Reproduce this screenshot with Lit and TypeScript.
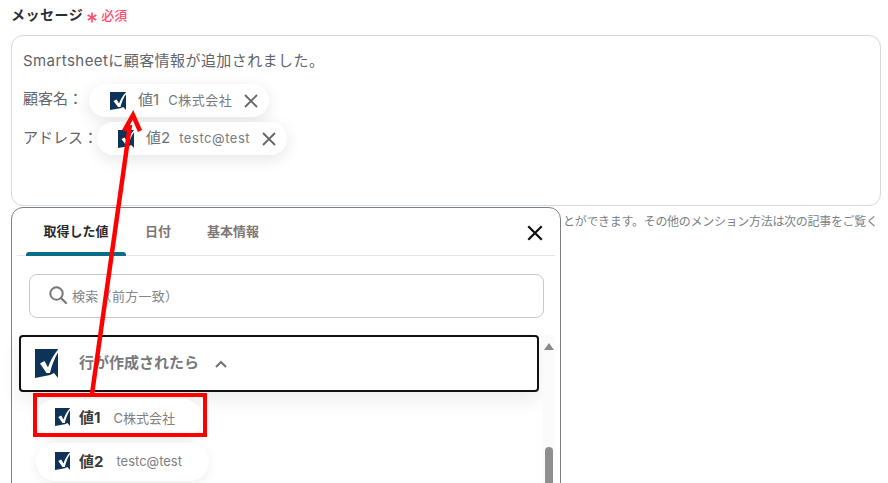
import { LitElement, css, html, svg } from "lit";
import { customElement } from "lit/decorators.js";

const logo = (w: number, h: number) => html`<svg class="logo" width=${w} height=${h} viewBox="0 0 23 29" preserveAspectRatio="none">
  <path d="M0 0H23V29L19 24L15 26L0 29Z" fill="#0d3358" />
  <path d="M5 14.5L9.5 12L13 18.5C15 12 18.5 6 23 0.5V3.5C19.5 9 16.5 17 15 24H11.5Z" fill="#fff" />
</svg>`;

const closeIcon = (size: number, color: string, width: number) => html`<svg width=${size} height=${size} viewBox="0 0 16 16">
  <path d="M2 2L14 14M14 2L2 14" stroke=${color} stroke-width=${width} fill="none" />
</svg>`;

const searchIcon = svg`<circle cx="8.5" cy="8.5" r="6.2" stroke="#777" stroke-width="2" fill="none" />
  <path d="M13 13L18 18" stroke="#777" stroke-width="2.2" stroke-linecap="round" />`;

@customElement("app-root")
export class AppRoot extends LitElement {
  static styles = css`
    :host {
      display: block;
      position: relative;
      width: 888px;
      height: 483px;
      overflow: hidden;
      background: #fff;
      font-family: Inter, "Noto Sans CJK JP", sans-serif;
      color: #5f646b;
    }

    .field {
      display: flex;
      flex-direction: column;
      gap: 10px;
      padding: 3px 7px 0 11px;
    }

    .label {
      display: flex;
      align-items: center;
      gap: 4px;
      height: 22px;
      font-size: 14px;
      font-weight: 700;
      letter-spacing: 0.5px;
      color: #2a2f36;
    }

    .required {
      display: flex;
      align-items: center;
      gap: 4px;
      font-size: 13px;
      font-weight: 500;
      letter-spacing: 0;
      color: #ff4f6e;
    }

    .star {
      margin-top: 7px;
    }

    .box {
      display: flex;
      flex-direction: column;
      height: 171px;
      padding: 15px 11px 0;
      border: 1px solid #d4d7dd;
      border-radius: 12px;
      box-sizing: border-box;
    }

    .intro {
      font-size: 15px;
      line-height: 20px;
      letter-spacing: 0.43px;
      margin-bottom: 13px;
    }

    .line {
      display: flex;
      align-items: flex-start;
      height: 38px;
      font-size: 15px;
      line-height: 30px;
    }

    .line.second {
      line-height: 32px;
    }

    .chip {
      display: flex;
      align-items: center;
      height: 33px;
      border-radius: 17px;
      background: #fff;
      box-shadow: 0 4px 16px rgba(0, 0, 0, 0.1);
      color: #6b6f75;
      line-height: 20px;
    }

    .chip.customer {
      margin-left: 6px;
    }

    .chip.address {
      margin-left: -1px;
    }

    .chip .logo {
      margin-left: 21px;
    }

    .chip .name {
      margin-left: 12px;
      padding-bottom: 2px;
      font-size: 15px;
    }

    .chip .sub {
      margin-left: 9px;
      padding-bottom: 2px;
      font-size: 13px;
      letter-spacing: 0.55px;
      color: #777b80;
    }

    .chip svg:last-child {
      margin: 0 10px 0 11px;
    }

    .hint {
      position: absolute;
      left: 563px;
      top: 213px;
      font-size: 12px;
      line-height: 18px;
      letter-spacing: -0.3px;
      color: #7a7f86;
      white-space: nowrap;
    }

    .popup {
      position: absolute;
      left: 11px;
      top: 207px;
      width: 550px;
      height: 300px;
      box-sizing: border-box;
      background: #fff;
      border: 1px solid #7c7f84;
      border-radius: 12px;
    }

    .tabs {
      display: flex;
      align-items: stretch;
      justify-content: space-between;
      height: 48px;
      box-sizing: border-box;
      margin-left: 5px;
      margin-right: 5px;
      border-bottom: 1px solid #e5e5e5;
    }

    .tab-list {
      display: flex;
      gap: 36px;
      padding-left: 9px;
    }

    .tab {
      display: flex;
      align-items: center;
      padding: 0 0 3px;
      font-size: 13px;
      font-weight: 700;
      color: #7d7672;
    }

    .tab.active {
      position: relative;
      width: 100px;
      margin-right: -17px;
      justify-content: center;
      color: #2a2a2a;
    }

    .tab.active::after {
      content: "";
      position: absolute;
      left: 0;
      right: 0;
      bottom: -1px;
      height: 4px;
      border-radius: 3px 3px 0 0;
      background: #0b6b8a;
    }

    .close {
      display: flex;
      align-items: center;
      padding: 2px 11px 0 0;
    }

    .search {
      display: flex;
      align-items: center;
      gap: 4px;
      height: 44px;
      margin: 18px 16px 17px 17px;
      padding: 0 0 2px 18px;
      border: 1px solid #c8c8c8;
      border-radius: 8px;
      box-sizing: border-box;
      font-size: 13px;
      letter-spacing: 0.3px;
      color: #858585;
    }

    .list {
      display: flex;
      gap: 4px;
      margin-left: 7px;
      margin-right: 5px;
    }

    .items {
      display: flex;
      flex-direction: column;
      width: 520px;
    }

    .group {
      display: flex;
      align-items: center;
      height: 57px;
      box-sizing: border-box;
      border: 2px solid #111;
      border-radius: 4px;
      padding-left: 14px;
      background: #fff;
      box-shadow: 0 8px 20px rgba(0, 0, 0, 0.08);
      font-size: 15px;
      font-weight: 700;
      color: #77797c;
    }

    .group .title {
      margin-left: 21px;
      padding-bottom: 4px;
    }

    .group svg:last-child {
      margin-left: 15px;
    }

    .pill {
      display: flex;
      align-items: center;
      align-self: flex-start;
      height: 38px;
      box-sizing: border-box;
      margin-left: 17px;
      padding: 0 27px 2px 19px;
      border-radius: 19px;
      background: #fff;
      box-shadow: 0 3px 12px rgba(0, 0, 0, 0.07);
      font-size: 15px;
      font-weight: 700;
      color: #3a3a3a;
    }

    .pill .name {
      margin-left: 9px;
      padding-bottom: 2px;
    }

    .pill .sub {
      margin-left: 13px;
      font-size: 13px;
      font-weight: 400;
      color: #808080;
    }

    .pill.first {
      margin-top: 7px;
      margin-bottom: 6px;
    }

    .scrollbar {
      position: relative;
      width: 12px;
      height: 150px;
      background: #fbfbfb;
    }

    .scrollbar::before {
      content: "";
      position: absolute;
      left: 1px;
      top: 8px;
      border-left: 5px solid transparent;
      border-right: 5px solid transparent;
      border-bottom: 7px solid #8a8a8a;
    }

    .thumb {
      position: absolute;
      left: 2px;
      top: 112px;
      width: 8px;
      height: 60px;
      border-radius: 4px;
      background: #8f8f8f;
    }

    .annotation {
      position: absolute;
      left: 0;
      top: 0;
      pointer-events: none;
    }
  `;

  render() {
    return html`
      <div class="field">
        <div class="label">
          メッセージ
          <span class="required">
            <svg class="star" width="10" height="11" viewBox="0 0 10 11">
              <path d="M5 0.5V10.5M0.7 3L9.3 8M9.3 3L0.7 8" stroke="#ff4f6e" stroke-width="1.7" fill="none" />
            </svg>
            必須
          </span>
        </div>
        <div class="box">
          <div class="intro">Smartsheetに顧客情報が追加されました。</div>
          <div class="line">
            顧客名：
            <div class="chip customer">
              ${logo(16, 18)}<span class="name">値1</span><span class="sub">C株式会社</span>
              ${closeIcon(16, "#666", 1.8)}
            </div>
          </div>
          <div class="line second">
            アドレス：
            <div class="chip address">
              ${logo(16, 18)}<span class="name">値2</span><span class="sub">testc@test</span>
              ${closeIcon(16, "#666", 1.8)}
            </div>
          </div>
        </div>
      </div>

      <div class="hint">とができます。その他のメンション方法は次の記事をご覧く</div>

      <div class="popup">
        <div class="tabs">
          <div class="tab-list">
            <div class="tab active">取得した値</div>
            <div class="tab">日付</div>
            <div class="tab">基本情報</div>
          </div>
          <div class="close">${closeIcon(18, "#111", 2)}</div>
        </div>
        <div class="search">
          <svg width="20" height="20" viewBox="0 0 20 20">${searchIcon}</svg>
          検索（前方一致）
        </div>
        <div class="list">
          <div class="items">
            <div class="group">
              ${logo(23, 29)}<span class="title">行が作成されたら</span>
              <svg width="14" height="10" viewBox="0 0 14 10">
                <path d="M2 8L7 3L12 8" stroke="#777" stroke-width="2.2" fill="none" />
              </svg>
            </div>
            <div class="pill first">
              ${logo(15, 18)}<span class="name">値1</span><span class="sub">C株式会社</span>
            </div>
            <div class="pill">
              ${logo(15, 18)}<span class="name">値2</span><span class="sub">testc@test</span>
            </div>
          </div>
          <div class="scrollbar"><div class="thumb"></div></div>
        </div>
      </div>

      <svg class="annotation" width="888" height="483" viewBox="0 0 888 483">
        <rect x="35" y="395" width="170" height="40" fill="none" stroke="#ff0000" stroke-width="4" />
        <path d="M92 394L130 125" stroke="#ff0000" stroke-width="4.5" fill="none" />
        <path d="M124 131L133 115L140 131" stroke="#ff0000" stroke-width="4.5" fill="none" />
      </svg>
    `;
  }
}
